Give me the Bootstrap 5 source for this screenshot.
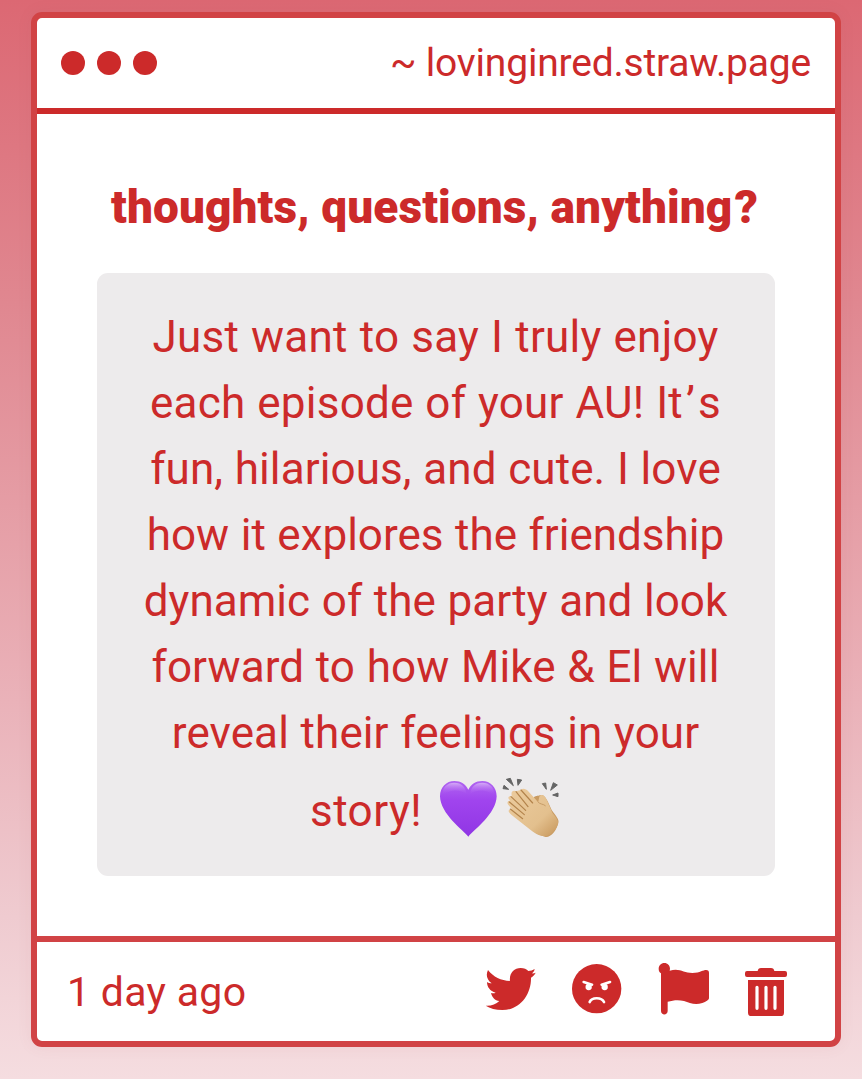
<!DOCTYPE html>
<html lang="en">
<head>
<meta charset="utf-8">
<meta name="viewport" content="width=device-width, initial-scale=1">
<title>lovinginred.straw.page</title>
<link href="https://cdn.jsdelivr.net/npm/bootstrap@5.3.0/dist/css/bootstrap.min.css" rel="stylesheet">
<style>
:root{--red:#cc2a2a;--edge:#d14345}
html{height:100%}
body{min-height:1079px;margin:0;padding:12px 21px 32px 31px;font-family:Roboto,"Liberation Sans",sans-serif;color:var(--red);background:linear-gradient(#dc6873,#e08790 28%,#eab2b9 65%,#efcbd0 85%,#f5dde0);overflow:hidden}
.window{height:1035px;border:6px solid var(--edge);border-radius:11px;background:#fff;box-shadow:0 0 16px rgba(150,80,90,.07);overflow:hidden}
.bar-top{height:96px;border-bottom:6px solid var(--red);padding:0 24px}
.dots{gap:12px}
.dot{width:24px;height:24px;border-radius:50%;background:var(--red)}
.site{font-size:39px;letter-spacing:-.2px;line-height:1;white-space:nowrap}
.content-area{padding:63px 60px 60px}
.ask{font-size:46px;font-weight:900;line-height:60px;letter-spacing:.1px;margin:0 0 36px;padding-right:3px;white-space:nowrap}
.ask span{margin-left:2px}
.message{height:603px;background:#edebec;border-radius:11px;padding:31px 1px 0 0;font-size:44px;line-height:66px;letter-spacing:.1px;word-spacing:.6px;white-space:nowrap}
.message .line{display:block}
.line:nth-child(1){letter-spacing:.25px;word-spacing:.8px}
.line:nth-child(2){letter-spacing:.24px}
.line:nth-child(4){letter-spacing:0}
.line:nth-child(5){letter-spacing:.05px}
.apos{margin:0 3px}
.message .ending{padding-top:10px;letter-spacing:.45px}
.emoji{vertical-align:-12px;margin-left:5px}
.bar-bottom{height:105px;border-top:6px solid var(--edge);padding:0 47px 0 30px}
.when{font-size:41px;letter-spacing:.3px;line-height:1;padding-top:2px}
.icons{gap:33px;margin-top:-3px}
.icons svg{height:60px;fill:var(--red);display:block}
</style>
</head>
<body>
<main class="window d-flex flex-column">
  <header class="bar-top d-flex align-items-center justify-content-between flex-shrink-0">
    <div class="dots d-flex"><span class="dot"></span><span class="dot"></span><span class="dot"></span></div>
    <div class="site">~ lovinginred.straw.page</div>
  </header>
  <section class="content-area flex-grow-1 text-center">
    <h1 class="ask">thoughts, questions, anything<span>?</span></h1>
    <div class="message">
      <span class="line">Just want to say I truly enjoy</span>
      <span class="line">each episode of your AU! It<span class="apos">’</span>s</span>
      <span class="line">fun, hilarious, and cute. I love</span>
      <span class="line">how it explores the friendship</span>
      <span class="line">dynamic of the party and look</span>
      <span class="line">forward to how Mike &amp; El will</span>
      <span class="line">reveal their feelings in your</span>
      <span class="line ending">story! <svg class="emoji" width="122" height="62" viewBox="25 18 366 186" role="img" aria-label="purple heart, clapping hands">
        <defs>
          <linearGradient id="heart" x1="0" y1="0" x2="0" y2="1"><stop offset="0" stop-color="#b065f0"/><stop offset=".35" stop-color="#a044ee"/><stop offset="1" stop-color="#9036e4"/></linearGradient>
          <linearGradient id="shine" x1="0" y1="0" x2="0" y2="1"><stop offset="0" stop-color="#dcb9f8" stop-opacity=".85"/><stop offset="1" stop-color="#a950ef" stop-opacity="0"/></linearGradient>
          <linearGradient id="skin" x1="0" y1="0" x2="1" y2="1"><stop offset="0" stop-color="#eccb9d"/><stop offset=".65" stop-color="#e3c08e"/><stop offset="1" stop-color="#c69559"/></linearGradient>
        </defs>
        <path fill="url(#heart)" d="M113 200C98 181 29 132 28 79C28 51 47 33 71 33C91 33 105 42 113 59C121 42 135 33 155 33C179 33 198 51 198 79C197 132 128 181 113 200Z"/>
        <path fill="url(#shine)" d="M35 75C34 52 50 38 71 38C93 38 104 50 108 72C82 56 59 60 35 75ZM118 72C122 50 133 38 155 38C176 38 192 52 191 75C167 60 144 56 118 72Z"/>
        <path fill="#656565" stroke="#656565" stroke-width="3" stroke-linejoin="round" d="M227 28L239 25L248 47ZM260 28L273 30L262 46ZM220 46L234 58L217 56ZM335 41L345 39L347 58ZM368 38L380 45L360 61ZM366 75L382 69L382 80Z"/>
        <path fill="#c99b62" d="M310 82C316 76 325 78 329 76C337 72 345 82 351 94L363 120C374 136 387 149 383 159C377 182 362 202 345 201L322 193L285 160Z"/>
        <path fill="url(#skin)" d="M270 60C277 53 286 57 292 63L322 96C326 91 323 80 330 76C339 73 345 81 350 94L365 128C374 141 386 151 381 164C374 184 358 199 340 199C324 198 310 189 297 178L242 134C228 124 235 117 243 117L236 108C226 99 231 91 239 92C228 84 234 76 244 80C239 66 247 59 256 64Z"/>
        <path fill="none" stroke="#b3834b" stroke-width="3.5" stroke-linecap="round" d="M271 60L306 99M256 65L292 110M241 80L285 121M236 96L281 134M239 117L276 146"/>
        <path fill="none" stroke="#c79c66" stroke-width="3" stroke-linecap="round" d="M322 96C328 104 338 101 344 107"/>
      </svg></span>
    </div>
  </section>
  <footer class="bar-bottom d-flex align-items-center justify-content-between flex-shrink-0">
    <div class="when">1 day ago</div>
    <div class="icons d-flex">
      <svg width="54" viewBox="45 120 162 180" aria-label="Twitter"><path d="M54 150C70 171 93 182 120 183C117 160 132 144 152 144C162 144 170 147 175 153C182 153 188 150 194 147C193 153 190 157 186 160C190 161 194 159 197 158C194 164 189 169 183 173C184 223 150 270 97 270C77 270 60 265 47 257C63 258 78 253 88 243C75 242 66 232 63 219C68 220 73 220 77 218C60 213 51 201 51 186C56 189 60 190 65 190C50 180 47 164 54 150Z"/></svg>
      <svg width="52" viewBox="306 120 156 180" aria-label="Angry"><circle cx="380" cy="206" r="74"/><g fill="#fff"><circle cx="356" cy="201" r="9.5"/><circle cx="404" cy="201" r="9.5"/></g><path d="M341 186L366 194M420 186L395 194M359 246C365 231 395 231 402 246" fill="none" stroke="#fff" stroke-width="8" stroke-linecap="round"/></svg>
      <svg width="54" viewBox="51 120 162 180" aria-label="Flag"><path d="M73 129C83 129 90 137 90 146L89 152C120 143 130 159 157 159C181 158 190 150 198 150C205 150 207 154 207 159V234C207 240 198 245 187 249C165 256 149 249 132 243C114 238 99 241 83 245V273C83 287 63 287 63 273V160C58 157 56 152 56 146C56 137 63 129 73 129Z"/></svg>
      <svg width="44" viewBox="312 120 132 180" aria-label="Delete"><path d="M321 153H353C354 147 357 144 363 144H393C399 144 402 147 403 153H435Q441 153 441 159V165Q441 171 435 171H321Q315 171 315 165V159Q315 153 321 153Z"/><path d="M324 180H432V278Q432 288 422 288H334Q324 288 324 278Z"/><path d="M351 202V265M378 202V265M405 202V265" stroke="#fff" stroke-width="9.5" stroke-linecap="round"/></svg>
    </div>
  </footer>
</main>
<script src="https://cdn.jsdelivr.net/npm/bootstrap@5.3.0/dist/js/bootstrap.bundle.min.js"></script>
</body>
</html>
